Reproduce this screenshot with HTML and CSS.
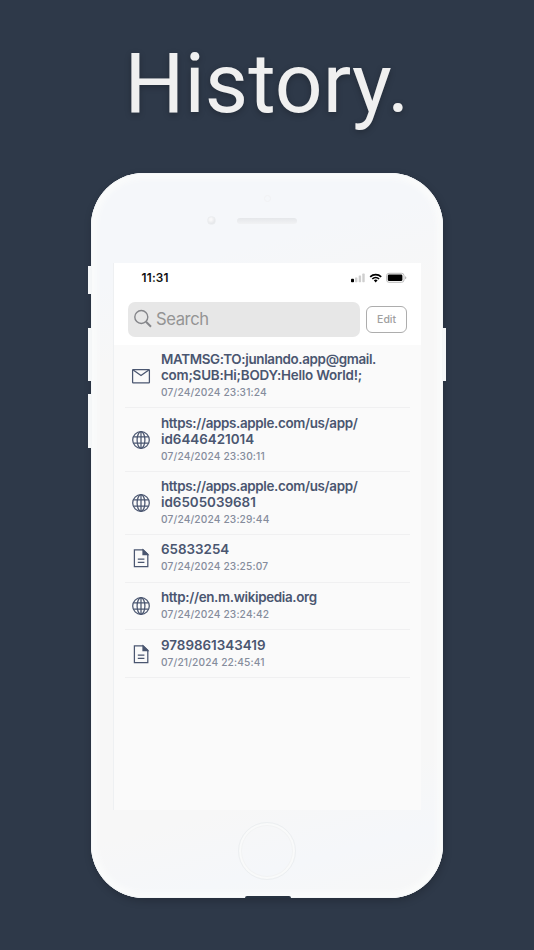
FILE: index.html
```html
<!DOCTYPE html>
<html lang="en">
<head>
    <meta charset="UTF-8">
    <title>History</title>
    <link rel="stylesheet" href="styles.css">
</head>
<body>

<!-- shared icons -->
<svg width="0" height="0" class="symbols">
    <symbol id="mail" viewBox="0 0 20 20">
        <rect x="1.6" y="3.5" width="16.8" height="13.4" rx="0.6"/>
        <path d="M2.2 4l7.8 5.6 7.8-5.6"/>
    </symbol>
    <symbol id="globe" viewBox="0 0 20 20">
        <circle cx="10" cy="10" r="8.3"/>
        <ellipse cx="10" cy="10" rx="3.9" ry="8.3"/>
        <path d="M2.6 6.8h14.8M2.6 13.2h14.8M10 1.8v16.4"/>
    </symbol>
    <symbol id="file" viewBox="0 0 20 20">
        <path d="M3.4 1.9h8.8l4.6 4.4v12.2H3.4z"/>
        <path class="fold" d="M12 1.9l4.8 4.6H12z"/>
        <path d="M6.8 11.1h6.6M6.8 14.4h6.6"/>
    </symbol>
</svg>

<h1>History.</h1>

<div class="phone">
    <span class="side mute"></span>
    <span class="side vol-up"></span>
    <span class="side vol-down"></span>
    <span class="side power"></span>

    <div class="top">
        <span class="sensor"></span>
        <span class="camera"></span>
        <span class="speaker"></span>
    </div>

    <div class="screen">
        <div class="head">
            <div class="status">
                <span class="time">11:31</span>
                <svg class="status-icons" width="58" height="12" viewBox="0 0 58 12">
                    <rect x="1" y="6.8" width="3" height="3.4" rx="0.8"/>
                    <g fill="#cfcfcf">
                        <rect x="5" y="5.4" width="2.4" height="4.8" rx="0.6"/>
                        <rect x="8.7" y="3.4" width="2.4" height="6.8" rx="0.6"/>
                        <rect x="12.3" y="1.6" width="2.4" height="8.6" rx="0.6"/>
                    </g>
                    <g fill="none" stroke="#000" stroke-width="1.7">
                        <path d="M20.2 4.8a8 8 0 0 1 11 0"/>
                        <path d="M22.3 7a5 5 0 0 1 6.8 0"/>
                    </g>
                    <path d="M23.8 8.3a2.8 2.8 0 0 1 3.8 0l-1.9 2.1z"/>
                    <rect x="36.6" y="1.3" width="17.4" height="9" rx="2.4" fill="none" stroke="#bbb"/>
                    <rect x="37.8" y="2.5" width="14.6" height="6.6" rx="1.3"/>
                    <path d="M55 4.3q1.4.4 1.4 1.5t-1.4 1.5z" fill="#bbb"/>
                </svg>
            </div>
            <div class="search-row">
                <div class="search">
                    <svg width="20" height="20" viewBox="0 0 20 20">
                        <circle cx="8.3" cy="8" r="6.5"/>
                        <path d="M13 12.8l5 5" stroke-width="2"/>
                    </svg>
                    <span>Search</span>
                </div>
                <button class="edit">Edit</button>
            </div>
        </div>

        <ul class="list">
            <li>
                <svg class="icon"><use href="#mail"/></svg>
                <div>
                    <p class="title tight">MATMSG:TO:junlando.app@gmail.</p>
                    <p class="title snug">com;SUB:Hi;BODY:Hello World!;</p>
                    <p class="date">07/24/2024 23:31:24</p>
                </div>
            </li>
            <li>
                <svg class="icon"><use href="#globe"/></svg>
                <div>
                    <p class="title tight">https://apps.apple.com/us/app/</p>
                    <p class="title">id6446421014</p>
                    <p class="date">07/24/2024 23:30:11</p>
                </div>
            </li>
            <li>
                <svg class="icon"><use href="#globe"/></svg>
                <div>
                    <p class="title tight">https://apps.apple.com/us/app/</p>
                    <p class="title">id6505039681</p>
                    <p class="date">07/24/2024 23:29:44</p>
                </div>
            </li>
            <li class="short">
                <svg class="icon"><use href="#file"/></svg>
                <div>
                    <p class="title">65833254</p>
                    <p class="date">07/24/2024 23:25:07</p>
                </div>
            </li>
            <li class="short">
                <svg class="icon"><use href="#globe"/></svg>
                <div>
                    <p class="title tight">http://en.m.wikipedia.org</p>
                    <p class="date">07/24/2024 23:24:42</p>
                </div>
            </li>
            <li class="short">
                <svg class="icon"><use href="#file"/></svg>
                <div>
                    <p class="title">9789861343419</p>
                    <p class="date">07/21/2024 22:45:41</p>
                </div>
            </li>
        </ul>
    </div>

    <div class="home"></div>
    <span class="notch"></span>
</div>

</body>
</html>
```
FILE: styles.css
```css
* {
    box-sizing: border-box;
}

body {
    margin: 0;
    height: 950px;
    overflow: hidden;
    background-color: #2e3949;
    font-family: Inter, "Liberation Sans", sans-serif;
}

.symbols {
    position: absolute;
}

h1 {
    margin: 0;
    height: 173px;
    padding-top: 34px;
    text-align: center;
    font: 400 84px/100px Roboto, sans-serif;
    color: #f0f0f0;
    text-shadow: 0 2px 6px rgba(0, 0, 0, 0.25);
}

.phone {
    position: relative;
    width: 352px;
    height: 725px;
    margin: 0 auto;
    border-radius: 53px;
    background: linear-gradient(165deg, #f5f7fa 0%, #f5f7fa 14%, #f7f7f7 24%, #f7f7f7 82%, #f5f7fa 91%, #f7f7f7 100%);
    box-shadow: inset 0 0 0 1px #f4f6f7, inset 0 0 5px 6px #fafbfb, 1px 3px 8px rgba(0, 0, 0, 0.2);
}

/* hardware buttons on the edges */
.side {
    position: absolute;
    width: 3px;
    background-color: #f5f7f8;
}

.mute {
    left: -3px;
    top: 93px;
    height: 28px;
}

.vol-up {
    left: -3px;
    top: 155px;
    height: 53px;
}

.vol-down {
    left: -3px;
    top: 221px;
    height: 54px;
}

.power {
    right: -3px;
    top: 155px;
    height: 53px;
}

.top {
    height: 89.5px;
}

.sensor {
    position: absolute;
    left: 173px;
    top: 22px;
    width: 7px;
    height: 7px;
    border: 1px solid #f1f2f4;
    border-radius: 50%;
}

.camera {
    position: absolute;
    left: 116px;
    top: 43px;
    width: 9px;
    height: 9px;
    border: 1px solid #eceef0;
    border-radius: 50%;
    background: radial-gradient(circle at 40% 35%, #f8f8f9 15%, #e2e4e7 80%);
}

.speaker {
    position: absolute;
    left: 146px;
    top: 45px;
    width: 60px;
    height: 6px;
    border-radius: 3px;
    background: linear-gradient(#e5e7ea, #f1f2f4);
}

.screen {
    width: 308px;
    height: 547.5px;
    margin-left: 22px;
    border-left: 1px solid #eef0f2;
    background-color: #fafafa;
}

.head {
    height: 82.5px;
    background-color: #fff;
}

.status {
    display: flex;
    justify-content: space-between;
    align-items: center;
    height: 31px;
    padding: 0 13px 0 27.5px;
}

.time {
    font-size: 11.8px;
    font-weight: 600;
    letter-spacing: 0.2px;
    color: #111;
}

.search-row {
    display: flex;
    align-items: center;
    padding: 8px 14px 0;
    gap: 6px;
}

.search {
    display: flex;
    align-items: center;
    gap: 3px;
    width: 233px;
    height: 35px;
    padding-left: 5px;
    border-radius: 7px;
    background-color: #e7e7e7;
    font-size: 16.6px;
    letter-spacing: -0.4px;
    color: #949494;
}

.search svg {
    fill: none;
    stroke: #85868a;
    stroke-width: 1.4;
}

.edit {
    width: 41px;
    height: 27px;
    padding: 0;
    border: 1px solid #adadad;
    border-radius: 6px;
    background-color: #fff;
    font: 500 10.5px Inter, sans-serif;
    color: #a0a0a0;
}

.list {
    margin: 0;
    padding: 0 11px;
    list-style: none;
}

.list li {
    display: flex;
    align-items: center;
    gap: 10.5px;
    height: 63.4px;
    padding-left: 5.5px;
    border-bottom: 1px solid #f0f0f1;
}

.list li.short {
    height: 47.6px;
}

.icon {
    width: 20px;
    height: 20px;
    fill: none;
    stroke: #4a5670;
    stroke-width: 1.25;
}

.fold {
    fill: #4a5670;
}

.list p {
    margin: 0;
    white-space: nowrap;
}

.title {
    font-size: 13.4px;
    font-weight: 600;
    line-height: 16px;
    color: #4a5670;
}

.tight {
    letter-spacing: -0.34px;
}

.snug {
    letter-spacing: -0.2px;
}

.list .date {
    margin: 1px 0 1px;
    font-size: 10.2px;
    font-weight: 500;
    line-height: 16px;
    letter-spacing: 0.14px;
    color: #858c9c;
}

.home {
    width: 58px;
    height: 58px;
    margin: 12px auto 0;
    border: 1px solid #eceff1;
    border-radius: 50%;
    box-shadow: inset 0 0 0 2px #f9fafa, inset 0 0 0 3px #f2f3f4;
}

/* charging port cut in the bottom edge */
.notch {
    position: absolute;
    left: 154px;
    bottom: 0;
    width: 46px;
    height: 2px;
    border-radius: 4px 4px 0 0;
    background-color: #283341;
}
```
